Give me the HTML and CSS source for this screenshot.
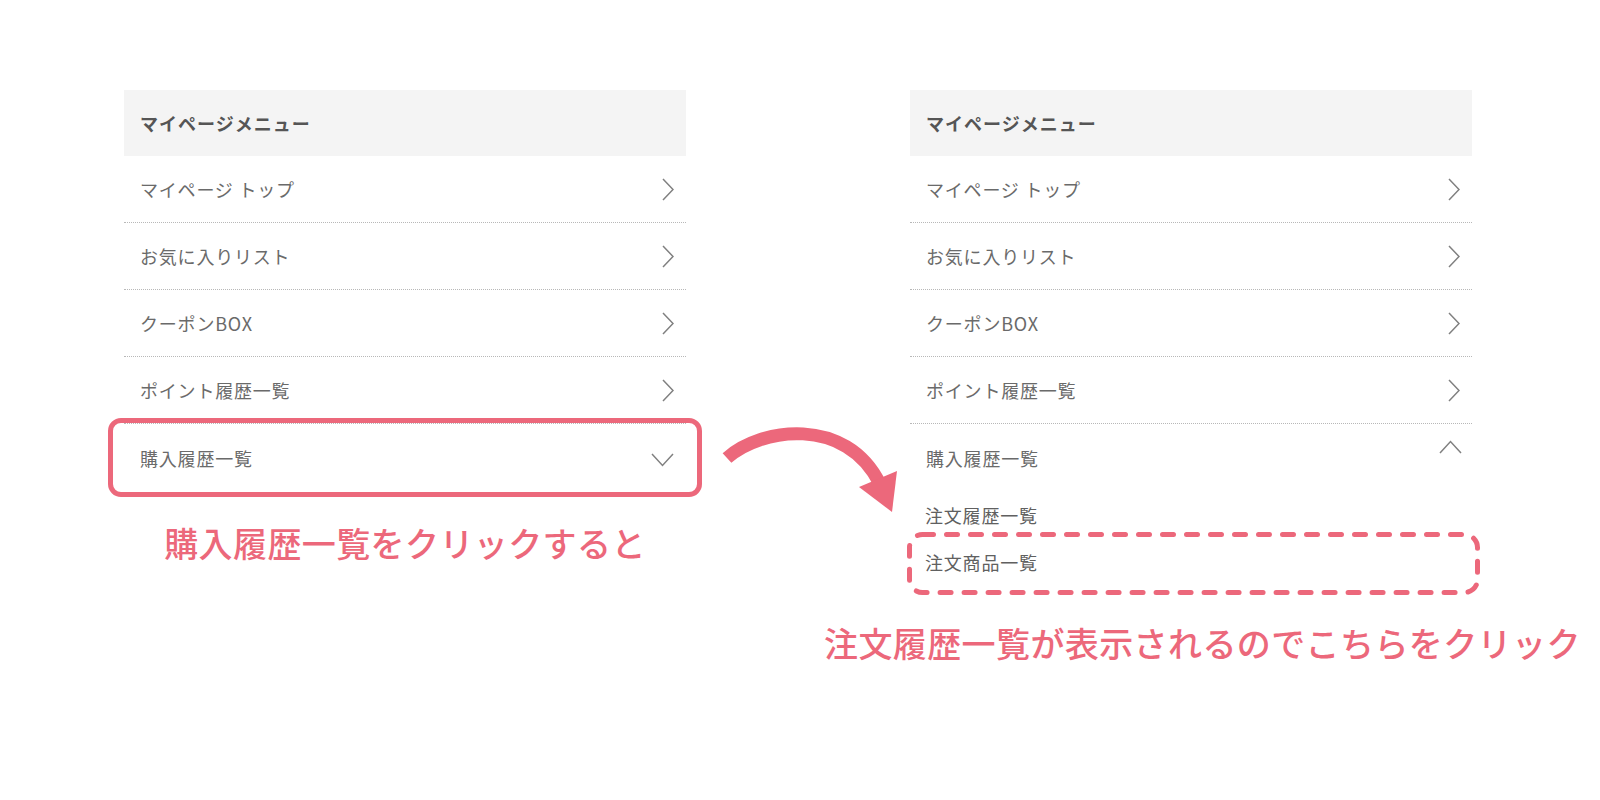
FILE: index.html
```html
<!DOCTYPE html>
<html lang="ja">
	<head>
		<meta charset="UTF-8" />
		<meta name="viewport" content="width=device-width, initial-scale=1.0" />
		<title>マイページメニュー 説明</title>
		<link rel="stylesheet" href="styles.css">
	</head>
	<body>
		<div class="stage">
			<section class="menu">
				<h2 class="menu-head">マイページメニュー</h2>
				<ul class="menu-list">
					<li class="menu-item">
						<span>マイページ トップ</span>
						<svg class="chev chev-right" viewBox="0 0 12 23"><polyline points="1,1 11,11.5 1,22" /></svg>
					</li>
					<li class="menu-item">
						<span>お気に入りリスト</span>
						<svg class="chev chev-right" viewBox="0 0 12 23"><polyline points="1,1 11,11.5 1,22" /></svg>
					</li>
					<li class="menu-item">
						<span>クーポンBOX</span>
						<svg class="chev chev-right" viewBox="0 0 12 23"><polyline points="1,1 11,11.5 1,22" /></svg>
					</li>
					<li class="menu-item">
						<span>ポイント履歴一覧</span>
						<svg class="chev chev-right" viewBox="0 0 12 23"><polyline points="1,1 11,11.5 1,22" /></svg>
					</li>
					<li class="menu-item last marked">
						<span>購入履歴一覧</span>
						<svg class="chev chev-down" viewBox="0 0 23 14"><polyline points="1,1 11.5,12.5 22,1" /></svg>
					</li>
				</ul>
				<p class="note">購入履歴一覧をクリックすると</p>
			</section>

			<section class="menu">
				<h2 class="menu-head">マイページメニュー</h2>
				<ul class="menu-list">
					<li class="menu-item">
						<span>マイページ トップ</span>
						<svg class="chev chev-right" viewBox="0 0 12 23"><polyline points="1,1 11,11.5 1,22" /></svg>
					</li>
					<li class="menu-item">
						<span>お気に入りリスト</span>
						<svg class="chev chev-right" viewBox="0 0 12 23"><polyline points="1,1 11,11.5 1,22" /></svg>
					</li>
					<li class="menu-item">
						<span>クーポンBOX</span>
						<svg class="chev chev-right" viewBox="0 0 12 23"><polyline points="1,1 11,11.5 1,22" /></svg>
					</li>
					<li class="menu-item">
						<span>ポイント履歴一覧</span>
						<svg class="chev chev-right" viewBox="0 0 12 23"><polyline points="1,1 11,11.5 1,22" /></svg>
					</li>
					<li class="menu-item last">
						<span>購入履歴一覧</span>
						<svg class="chev chev-up" viewBox="0 0 23 14"><polyline points="1,13 11.5,1.5 22,13" /></svg>
					</li>
				</ul>
				<ul class="sub-list">
					<li class="sub-item">注文履歴一覧</li>
					<li class="sub-item dashed">
						注文商品一覧
						<svg class="dash-box" viewBox="0 0 573 63"><rect x="2.5" y="2.5" width="568" height="58" rx="13" ry="13" /></svg>
					</li>
				</ul>
				<p class="note note-wide">注文履歴一覧が表示されるのでこちらをクリック</p>
			</section>

			<!-- curved arrow between the two menus -->
			<svg class="curve-arrow" viewBox="700 400 210 130">
				<path d="M727 458 C760 428 846 415 880 484" />
				<polygon points="859,487 897,471 892,512" />
			</svg>
		</div>
	</body>
</html>
```

FILE: styles.css
```css
* {
	box-sizing: border-box;
}

body {
	margin: 0;
	background-color: #ffffff;
	font-family: 'Noto Sans CJK JP', 'Noto Sans', sans-serif;
	color: #666666;
}

.stage {
	position: relative;
	display: flex;
	gap: 224px;
	width: 1600px;
	height: 800px;
	padding: 90px 0 0 124px;
	overflow: hidden;
}

.menu {
	width: 562px;
}

.menu-head {
	margin: 0;
	height: 66px;
	display: flex;
	align-items: center;
	padding-left: 16px;
	background-color: #f4f4f4;
	color: #555555;
	font-size: 18px;
	font-weight: bold;
	letter-spacing: 1px;
}

.menu-list,
.sub-list {
	list-style: none;
	margin: 0;
	padding: 0;
}

.menu-item {
	position: relative;
	height: 67px;
	display: flex;
	align-items: center;
	justify-content: space-between;
	padding: 0 12px 0 16px;
	border-bottom: 1px dotted #b8b8b8;
	font-size: 18px;
	letter-spacing: 0.8px;
	color: #6a6a6a;
}

.menu-item.last {
	border-bottom: none;
}

.chev {
	fill: none;
	stroke: #808080;
	stroke-width: 1.5;
}

.chev-right {
	width: 12px;
	height: 23px;
}

.chev-down {
	width: 23px;
	height: 14px;
	margin-top: 5px;
}

.chev-up {
	width: 23px;
	height: 14px;
	margin-top: -22px;
	margin-right: -2px;
}

/* pink frame round the item to click */
.menu-item.marked::after {
	content: '';
	position: absolute;
	top: -6px;
	bottom: -6px;
	left: -16px;
	right: -16px;
	border: 5px solid #ec687b;
	border-radius: 13px;
}

.sub-item {
	position: relative;
	height: 47px;
	display: flex;
	align-items: center;
	padding-left: 15px;
	font-size: 18px;
	letter-spacing: 0.8px;
	color: #606060;
}

.dash-box {
	position: absolute;
	top: -6px;
	left: -3px;
	width: 573px;
	height: 63px;
}

.dash-box rect {
	fill: none;
	stroke: #ec687b;
	stroke-width: 5;
	stroke-linecap: round;
	stroke-dasharray: 11 13;
}

.note {
	margin: 28px 0 0;
	text-align: center;
	color: #ec687b;
	font-size: 34px;
	font-weight: 500;
	line-height: 48px;
	letter-spacing: 0.4px;
	white-space: nowrap;
}

.note-wide {
	margin: 34px 0 0 -86px;
	text-align: left;
}

.curve-arrow {
	position: absolute;
	left: 700px;
	top: 400px;
	width: 210px;
	height: 130px;
}

.curve-arrow path {
	fill: none;
	stroke: #ec687b;
	stroke-width: 13;
}

.curve-arrow polygon {
	fill: #ec687b;
}
```
